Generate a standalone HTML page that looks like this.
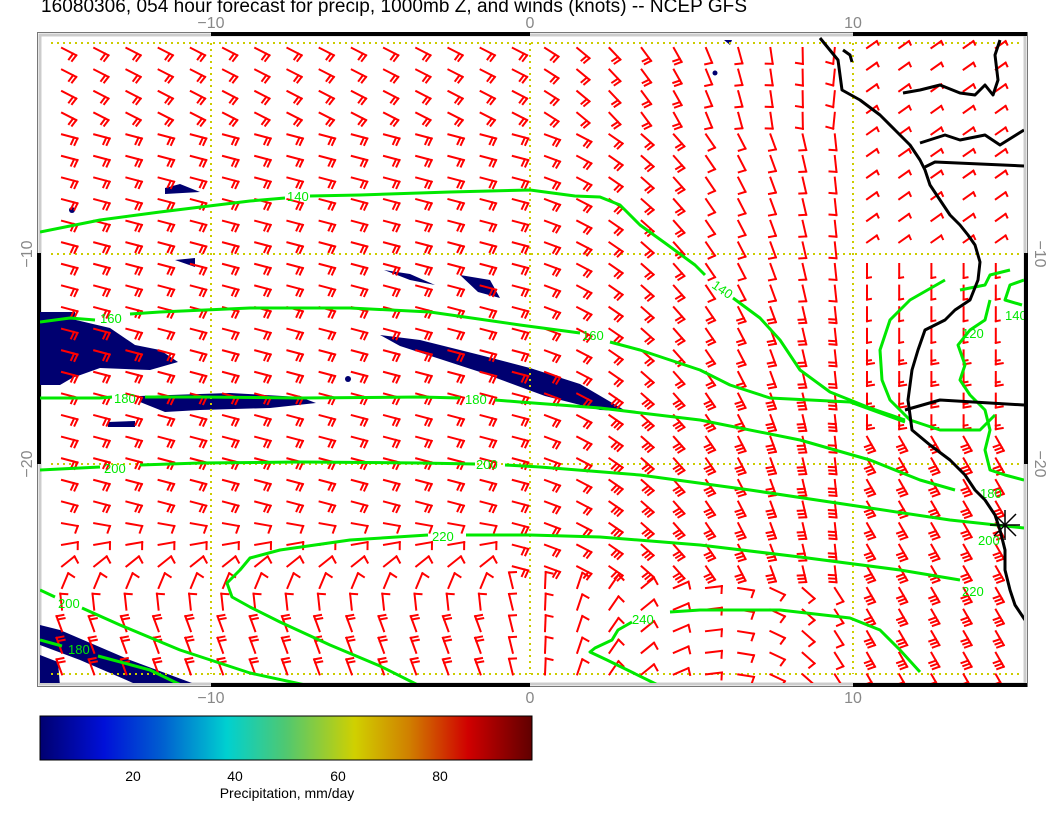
<!DOCTYPE html>
<html><head><meta charset="utf-8"><style>
html,body{margin:0;padding:0;background:#fff;width:1056px;height:816px;overflow:hidden}
svg{display:block}
text{font-family:"Liberation Sans",sans-serif}
</style></head><body>
<svg id="s" width="1056" height="816" xmlns="http://www.w3.org/2000/svg">
<defs>
<linearGradient id="cm" x1="0" x2="1" y1="0" y2="0">
<stop offset="0" stop-color="#000070"/>
<stop offset="0.13" stop-color="#0010d8"/>
<stop offset="0.25" stop-color="#0060d0"/>
<stop offset="0.38" stop-color="#00d0d0"/>
<stop offset="0.50" stop-color="#50c870"/>
<stop offset="0.64" stop-color="#d0d000"/>
<stop offset="0.75" stop-color="#d08000"/>
<stop offset="0.87" stop-color="#d00000"/>
<stop offset="1" stop-color="#600000"/>
</linearGradient>
<clipPath id="cp"><rect x="40" y="36" width="984" height="647"/></clipPath>
</defs>
<text x="41" y="12" font-size="19" fill="#000" textLength="706">16080306, 054 hour forecast for precip, 1000mb Z, and winds (knots) -- NCEP GFS</text>
<g font-size="16" fill="#888" text-anchor="middle">
<text x="211" y="28">−10</text><text x="530" y="28">0</text><text x="853" y="28">10</text>
<text x="211" y="703">−10</text><text x="530" y="703">0</text><text x="853" y="703">10</text>
<text transform="translate(32,254) rotate(-90)">−10</text>
<text transform="translate(32,464) rotate(-90)">−20</text>
<text transform="translate(1035,254) rotate(90)">−10</text>
<text transform="translate(1035,464) rotate(90)">−20</text>
</g>
<rect x="37.5" y="32.5" width="990" height="654" fill="none" stroke="#777" stroke-width="1"/>
<rect x="40" y="35" width="985" height="649" fill="none" stroke="#ccc" stroke-width="3"/>
<g fill="#000">
<rect x="211" y="32" width="319" height="4"/><rect x="853" y="32" width="174" height="4"/>
<rect x="211" y="683" width="319" height="4"/><rect x="853" y="683" width="174" height="4"/>
<rect x="37" y="253" width="4" height="211"/><rect x="1024" y="253" width="4" height="211"/>
</g>
<g clip-path="url(#cp)">
<g fill="#000070">
<polygon points="40,312 75,312 76,320 110,328 135,345 160,350 178,362 150,370 100,368 72,378 60,385 40,385"/>
<polygon points="140,396 230,393 300,397 316,403 270,408 200,410 165,412 140,402"/>
<polygon points="108,422 135,421 135,427 108,427"/>
<polygon points="380,335 420,340 480,355 530,368 580,384 626,411 600,410 545,396 480,372 400,346"/>
<polygon points="460,275 490,280 500,298 478,292"/>
<polygon points="384,270 410,274 435,285 410,280"/>
<polygon points="165,188 180,184 200,192 165,194"/>
<polygon points="175,260 195,258 195,267"/>
<polygon points="40,625 60,630 130,660 200,686 140,686 80,660 40,645"/>
<polygon points="40,655 58,662 60,686 40,686"/>
<polygon points="724,40 732,40 730,45"/>
<circle cx="715" cy="73" r="2.5"/><circle cx="72" cy="210" r="3"/><circle cx="348" cy="379" r="3"/>
</g>
<g stroke="#cc0" stroke-width="2" stroke-dasharray="2,4" fill="none">
<line x1="51" y1="43" x2="1020" y2="43"/><line x1="51" y1="254" x2="1020" y2="254"/>
<line x1="51" y1="464" x2="1020" y2="464"/><line x1="51" y1="674" x2="1020" y2="674"/>
<line x1="211" y1="43" x2="211" y2="674"/><line x1="530" y1="43" x2="530" y2="674"/>
<line x1="853" y1="43" x2="853" y2="674"/>
</g>
<g id="barbs" stroke="#f00" stroke-width="2" fill="none" stroke-linecap="square"></g>
<g stroke="#00e800" stroke-width="3" fill="none" stroke-linejoin="round">
<polyline points="40,232 100,220 160,212 250,201 285,198"/>
<polyline points="310,196 360,195 450,192 530,190 575,196 600,197 620,205 640,225 665,243 695,265 705,275"/>
<polyline points="733,298 760,318 780,340 800,370 830,392 870,408 905,420"/>
<polyline points="40,322 70,318 95,320"/>
<polyline points="130,314 160,312 250,308 350,308 430,312 520,325 580,333"/>
<polyline points="610,342 640,350 700,370 730,385 770,398 850,402 905,422"/>
<polyline points="40,398 100,398 112,397"/>
<polyline points="145,397 200,397 300,398 420,397 460,398"/>
<polyline points="495,400 520,402 600,408 700,420 800,440 870,460 920,480 955,490"/>
<polyline points="40,470 100,467"/>
<polyline points="140,465 200,463 300,462 420,463 475,464"/>
<polyline points="505,465 540,467 640,475 750,490 850,505 950,520 1024,528"/>
<polyline points="428,535 350,540 280,550 250,558 240,570 227,583 232,597 250,607 280,622 330,645 380,666 420,686"/>
<polyline points="466,535 530,535 600,537 700,545 800,557 900,570 960,580"/>
<polyline points="40,590 55,597"/>
<polyline points="82,608 120,625 180,650 250,673 310,686"/>
<polyline points="40,640 62,646"/>
<polyline points="98,656 150,670 183,686"/>
<polyline points="670,612 700,610 780,610 850,618 880,630 900,650 920,672"/>
<polyline points="632,622 618,630 612,640 595,648 590,652 607,660 660,686"/>
<polyline points="1024,280 1010,285 1005,300 1022,305"/>
<polyline points="945,280 910,300 890,320 880,350 882,380 890,400 910,420 940,430 980,430 995,415"/>
<polyline points="990,300 985,320 970,330 958,345 965,365 960,380 970,395 985,410 990,430 985,450 990,470 1005,475 1024,480"/>
<polyline points="960,290 985,285 990,275 1010,270"/>
</g>
<g fill="#00e800" font-size="13">
<text x="287" y="201">140</text><text transform="translate(711,287) rotate(35)">140</text>
<text x="100" y="323">160</text><text x="582" y="340">160</text>
<text x="114" y="403">180</text><text x="465" y="404">180</text>
<text x="104" y="473">200</text><text x="476" y="469">200</text>
<text x="432" y="541">220</text><text x="962" y="596">220</text>
<text x="58" y="608">200</text><text x="68" y="654">180</text>
<text x="632" y="624">240</text><text x="980" y="498">180</text><text x="978" y="545">200</text>
<text x="962" y="338">120</text><text x="1005" y="320">140</text>
</g>
<g stroke="#000" stroke-width="3" fill="none" stroke-linejoin="round">
<polyline points="820,38 838,60 842,90 860,100 880,115 895,130 910,145 920,160 925,170 930,185 940,200 950,215 960,225 968,235 975,245 980,262 978,280 970,300 955,310 945,320 925,330 918,350 912,370 908,400 912,430 930,445 950,460 965,475 975,490 985,500 995,515 1000,530 1005,550 1005,570 1010,590 1015,605 1025,620"/>
<polyline points="903,93 920,90 940,85 960,93 975,95 985,85 993,95 998,80 995,55 1000,40"/>
<polyline points="920,143 945,135 960,140 985,135 1000,145 1024,130"/>
<polyline points="925,167 935,162 1024,166"/>
<polyline points="905,410 940,400 1024,405"/>
<polyline points="843,50 850,55 852,62"/>
</g>
<g stroke="#000" stroke-width="1.5">
<line x1="990" y1="525" x2="1020" y2="525"/><line x1="1005" y1="510" x2="1005" y2="540"/>
<line x1="994" y1="514" x2="1016" y2="536"/><line x1="994" y1="536" x2="1016" y2="514"/>
</g>
</g>
<rect x="40" y="716" width="492" height="44" fill="url(#cm)" stroke="#000" stroke-width="1"/>
<g font-size="14" fill="#000" text-anchor="middle">
<text x="133" y="781">20</text><text x="235" y="781">40</text><text x="338" y="781">60</text><text x="440" y="781">80</text>
<text x="287" y="798">Precipitation, mm/day</text>
</g>
</svg>
<script>
(function(){
var g=document.getElementById('barbs'),h='';
function clamp(v,a,b){return v<a?a:v>b?b:v;}
for(var j=0;j<30;j++){var y=48+j*21.6;if(y>682)break;
for(var i=0;i<31;i++){var x=62+i*32.2;if(x>1020)break;
var d,n,L=16,side=1;
if(x>840){
 if(y<250){d=-35;n=0.5;L=12;side=1;}
 else if(y<430){d=90;n=y<330?0.5:1.5;L=14;side=-1;}
 else{d=60;n=3;}
}
else if(y>520&&x<500){var t=clamp((y-530)/90,0,1);d=10-120*t;n=y>610?2:1;}
else if(y>575&&x>=500){d=-110+(x-500)/340*170;n=1;}
else{d=15+Math.max(0,x-520)/320*70+(y<120?12:0);n=y<150?2:((x>600&&y>380)?3:2);if(x>700&&y<300){n=1;}}
var r=d*Math.PI/180;
var ex=x+L*Math.cos(r),ey=y+L*Math.sin(r);
h+='<line x1="'+x.toFixed(1)+'" y1="'+y.toFixed(1)+'" x2="'+ex.toFixed(1)+'" y2="'+ey.toFixed(1)+'"/>';
var fr=(d+side*100)*Math.PI/180;var cnt=Math.ceil(n);
for(var k=0;k<cnt;k++){var len=(k==cnt-1&&n%1)?4:7;
var bx=ex-k*3.5*Math.cos(r),by=ey-k*3.5*Math.sin(r);
h+='<line x1="'+bx.toFixed(1)+'" y1="'+by.toFixed(1)+'" x2="'+(bx+len*Math.cos(fr)).toFixed(1)+'" y2="'+(by+len*Math.sin(fr)).toFixed(1)+'"/>';}
}}
g.innerHTML=h;
})();
</script>
</body></html>
